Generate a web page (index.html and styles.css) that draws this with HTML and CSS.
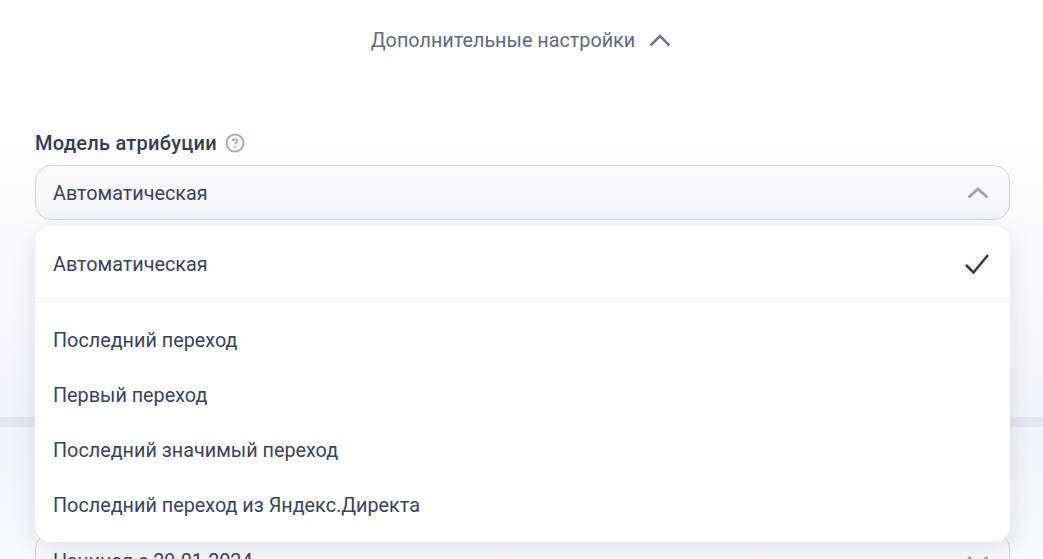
FILE: index.html
```html
<!DOCTYPE html>
<html lang="ru">
<head>
  <meta charset="UTF-8" />
  <title>Дополнительные настройки</title>
  <link rel="stylesheet" href="styles.css">
</head>
<body>
  <div class="toggle">
    <span>Дополнительные настройки</span>
    <svg class="toggle-arrow" width="24" height="24" viewBox="0 0 24 24"><path d="M2.500 17.500 L12 8 L21.500 17.500" /></svg>
  </div>

  <section class="panel panel-top">
    <div class="field">
      <div class="label">
        <span>Модель атрибуции</span>
        <svg class="help" width="20" height="20" viewBox="0 0 20 20">
          <circle cx="10" cy="10" r="8.500" />
          <path d="M7.500 8 C7.500 5.800 12.500 5.800 12.500 8 C12.500 9.700 10 9.700 10 11.600" />
          <circle class="help-dot" cx="10" cy="14" r="1" />
        </svg>
      </div>
      <div class="select">
        <span class="select-value">Автоматическая</span>
        <svg class="select-arrow" width="24" height="24" viewBox="0 0 24 24"><path d="M2.500 16.500 L12 8 L21.500 16.500" /></svg>
      </div>
      <div class="dropdown">
        <div class="option option-current">
          <span>Автоматическая</span>
          <svg class="check" width="26" height="26" viewBox="0 0 26 26"><path d="M2 13 L9.500 20.500 L24 3" /></svg>
        </div>
        <div class="option-list">
          <div class="option">Последний переход</div>
          <div class="option">Первый переход</div>
          <div class="option">Последний значимый переход</div>
          <div class="option">Последний переход из Яндекс.Директа</div>
        </div>
      </div>
    </div>
  </section>

  <div class="band"></div>

  <section class="panel panel-bottom">
    <div class="select select-date">
      <span class="select-value">Начиная с 29.01.2024</span>
      <svg class="select-arrow" width="24" height="24" viewBox="0 0 24 24"><path d="M2.500 8 L12 16.500 L21.500 8" /></svg>
    </div>
  </section>
</body>
</html>
```

FILE: styles.css
```css
* { box-sizing: border-box; }
body {
  margin: 0; height: 559px; overflow: hidden; background: #fff;
  font-family: Roboto, "Liberation Sans", sans-serif; font-size: 19.800px; color: #3a435c;
}
.toggle {
  height: 110px; padding-bottom: 30px;
  display: flex; align-items: center; justify-content: center; gap: 13px;
  color: #5f6982;
}
.toggle-arrow path { fill: none; stroke: #6b7590; stroke-width: 2.500; }
.panel { overflow: visible; }
.panel-top {
  height: 307px; padding: 21px 33px 0 35px;
  background: linear-gradient(180deg, #fff 0%, #fbfbfd 40%, #f3f4f9 100%);
  border-radius: 40px 40px 0 0;
}
.field { position: relative; }
.label {
  height: 24px; margin-bottom: 10px;
  display: flex; align-items: center; gap: 8px;
  font-size: 20px; font-weight: 500; letter-spacing: 0.250px; color: #343c54;
}
.help circle { fill: none; stroke: #a5adc5; stroke-width: 2; }
.help path { fill: none; stroke: #a5adc5; stroke-width: 1.600; }
.help .help-dot { fill: #a5adc5; stroke: none; }
.select {
  height: 55px; padding: 0 19px 0 17px;
  display: flex; align-items: center; justify-content: space-between;
  background: linear-gradient(180deg, #fcfcfe, #f4f5f9);
  border: 1px solid #cfd3e1; border-radius: 16px;
}
.select-value { padding-top: 2px; }
.select-arrow path { fill: none; stroke: #9aa2ba; stroke-width: 2.800; }
.dropdown {
  position: absolute; left: 0; right: 0; top: 95px; z-index: 2;
  height: 316px; background: #fff; border-radius: 16px;
  box-shadow: 0 6px 24px rgba(80, 90, 130, 0.16);
}
.option { height: 55px; padding: 0 18px; display: flex; align-items: center; }
.option-current {
  height: 76px; padding: 2px 20px 0 18px; justify-content: space-between;
  border-bottom: 1px solid #eceef3;
}
.option-list { padding-top: 11px; }
.check path { fill: none; stroke: #343c54; stroke-width: 2.600; }
.band { height: 10px; background: #e4e8f1; }
.panel-bottom {
  height: 132px; padding: 106px 33px 0 35px; overflow: hidden;
  background: linear-gradient(180deg, #f3f4f9, #f8f9fc);
}
```
